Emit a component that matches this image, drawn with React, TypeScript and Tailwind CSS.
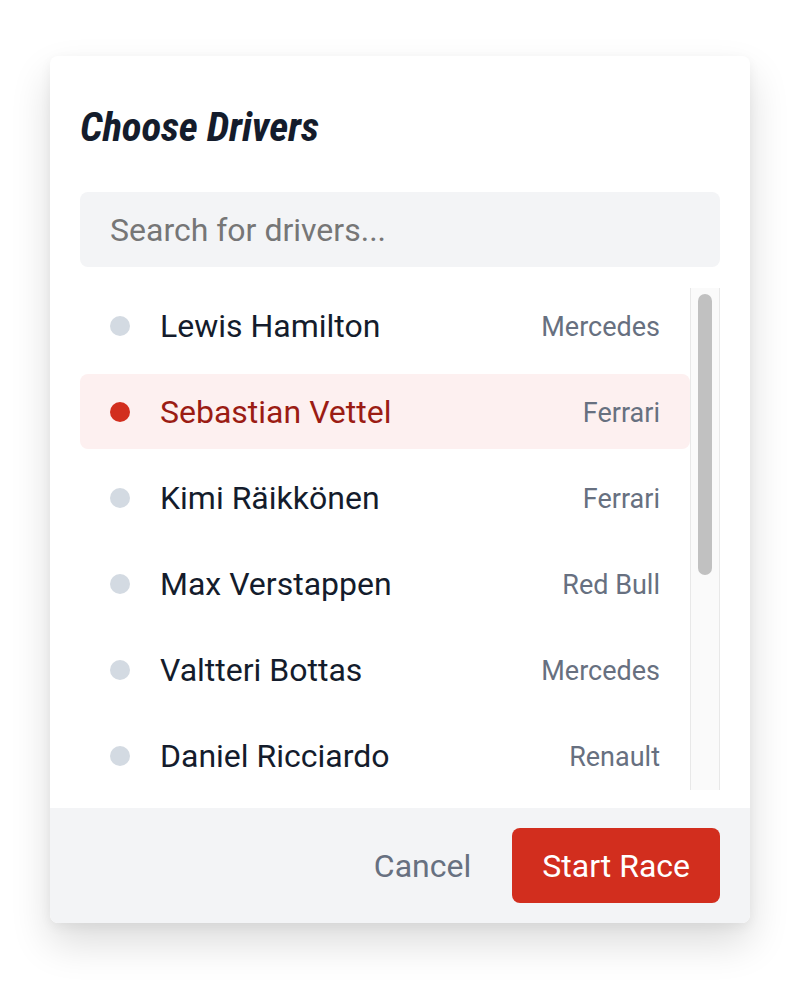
import React, { useState } from 'react';

interface Driver {
  id: number;
  name: string;
  team: string;
}

const drivers: Driver[] = [
  { id: 1, name: 'Lewis Hamilton', team: 'Mercedes' },
  { id: 2, name: 'Sebastian Vettel', team: 'Ferrari' },
  { id: 3, name: 'Kimi Räikkönen', team: 'Ferrari' },
  { id: 4, name: 'Max Verstappen', team: 'Red Bull' },
  { id: 5, name: 'Valtteri Bottas', team: 'Mercedes' },
  { id: 6, name: 'Daniel Ricciardo', team: 'Renault' },
  { id: 7, name: 'Fernando Alonso', team: 'McLaren' },
  { id: 8, name: 'Sergio Pérez', team: 'Racing Point' },
  { id: 9, name: 'Nico Hülkenberg', team: 'Renault' },
  { id: 10, name: 'Esteban Ocon', team: 'Force India' },
];

const App: React.FC = () => {
  const [selected, setSelected] = useState<number>(2);
  const [search, setSearch] = useState('');

  const filtered = drivers.filter(d => d.name.toLowerCase().includes(search.toLowerCase()));

  return (
    <div className="min-h-screen bg-white pt-[56px] px-[50px] font-['Roboto',sans-serif]">
      <div className="w-[700px] bg-white rounded-[8px] shadow-[0_20px_40px_rgba(0,0,0,0.14),0_4px_12px_rgba(0,0,0,0.05)] overflow-hidden">
        <div className="px-[30px] pt-[47px]">
          <h2 className="text-[41px] leading-[48px] font-bold italic font-stretch-condensed text-[#141c2c] tracking-[-0.2px]">
            Choose Drivers
          </h2>

          <input
            type="text"
            placeholder="Search for drivers..."
            value={search}
            onChange={(e) => setSearch(e.target.value)}
            className="mt-[41px] w-full h-[75px] px-[30px] rounded-[8px] bg-[#f3f4f6] text-[32px] text-[#1f2937] placeholder:text-[#767676] outline-none"
          />

          {/* Driver list */}
          <div className="mt-[21px] h-[502px] flex">
            <div className="flex-1 overflow-y-auto [scrollbar-width:none]">
              {filtered.map((driver) => {
                const isSelected = driver.id === selected;
                return (
                  <div
                    key={driver.id}
                    onClick={() => setSelected(driver.id)}
                    className={`flex items-center h-[75px] mb-[11px] px-[30px] rounded-[8px] cursor-pointer ${
                      isSelected ? 'bg-[#fdf0f0]' : 'bg-white'
                    }`}
                  >
                    <span className={`w-[20px] h-[20px] rounded-full mr-[30px] shrink-0 ${isSelected ? 'bg-[#d22e1e]' : 'bg-[#d3dae2]'}`} />
                    <span className={`flex-1 text-[32px] ${isSelected ? 'text-[#9b1c14]' : 'text-[#141c2c]'}`}>
                      {driver.name}
                    </span>
                    <span className="text-[27px] text-[#677080] pt-[3px]">{driver.team}</span>
                  </div>
                );
              })}
            </div>
            {/* scrollbar */}
            <div className="w-[30px] shrink-0 bg-[#fafafa] border-x border-[#e8e8e8] pt-[6px] px-[7px]">
              <div className="h-[281px] rounded-full bg-[#c1c1c1]" />
            </div>
          </div>
        </div>

        {/* Footer */}
        <div className="mt-[18px] bg-[#f3f4f6] px-[30px] py-[20px] flex justify-end items-center">
          <button className="px-[20px] h-[75px] mr-[21px] text-[32px] text-[#677080]">Cancel</button>
          <button className="h-[75px] px-[30px] rounded-[8px] bg-[#d22e1e] text-white text-[32px]">Start Race</button>
        </div>
      </div>
    </div>
  );
};

export default App;
